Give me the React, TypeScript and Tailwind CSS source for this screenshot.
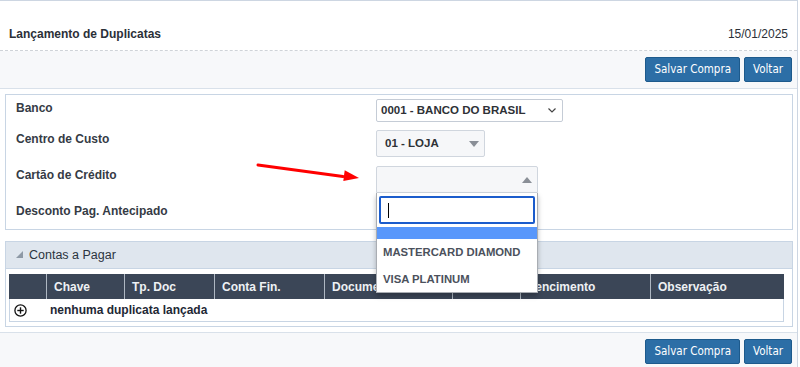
import React from "react";

function Btn({ children }: { children: React.ReactNode }) {
  return (
    <button className="h-[25px] px-[8px] rounded-[2px] border border-[#1d5a8c] bg-[#2c6ea6] text-white text-[11.5px] leading-none font-['DejaVu_Sans_Condensed','DejaVu_Sans',Tahoma,sans-serif]">
      {children}
    </button>
  );
}

function Toolbar({ className = "" }: { className?: string }) {
  return (
    <div className={`flex justify-end gap-[4px] bg-[#f7f8fa] pr-[5px] ${className}`}>
      <Btn>Salvar Compra</Btn>
      <Btn>Voltar</Btn>
    </div>
  );
}

function TriDown() {
  return (
    <svg width="10" height="6" viewBox="0 0 10 6">
      <polygon points="0,0 10,0 5,6" fill="#8a8f97" />
    </svg>
  );
}

function TriUp() {
  return (
    <svg width="10" height="6" viewBox="0 0 10 6">
      <polygon points="0,6 10,6 5,0" fill="#8a8f97" />
    </svg>
  );
}

function FormRow({ label, h, children }: { label: string; h: string; children?: React.ReactNode }) {
  return (
    <div className={`flex ${h}`}>
      <div className="w-[370px] pl-[10px] pt-[1px] leading-[16px] text-[12px] font-bold text-[#353b45]">{label}</div>
      <div className="relative">{children}</div>
    </div>
  );
}

// a coluna de valor fica escondida atrás da lista aberta
const headers = ["", "Chave", "Tp. Doc", "Conta Fin.", "Documento", "", "Vencimento", "Observação"];

export default function App() {
  return (
    <div className="w-[800px] h-[367px] overflow-hidden bg-white font-['Liberation_Sans',Arial,sans-serif]">
      <div className="w-[798px] h-[367px] border-t border-r border-[#cdd6e2] flex flex-col">
        {/* cabeçalho */}
        <div className="h-[50px] shrink-0 flex justify-between px-[9px] pt-[24px] border-b border-dashed border-[#cfd3d8]">
          <span className="text-[12px] leading-[18px] font-bold text-[#2b3038]">Lançamento de Duplicatas</span>
          <span className="text-[12px] leading-[18px] text-[#2b3038]">15/01/2025</span>
        </div>
        <Toolbar className="h-[38px] shrink-0 pt-[6px] border-b border-[#d9e1ea]" />

        <div className="pl-[5px] pr-[4px] pt-[5px]">
          {/* formulário */}
          <div className="relative z-10 border border-[#c8d5e4] pt-[4px] h-[136px]">
            <FormRow label="Banco" h="h-[31px]">
              <div className="w-[187px] h-[23px] flex items-center justify-between pl-[4px] pr-[6px] bg-white border border-[#c5ccd6] rounded-[2px] text-[11.5px] font-bold text-[#2e3136]">
                <span>0001 - BANCO DO BRASIL</span>
                <svg width="8" height="5" viewBox="0 0 8 5">
                  <polyline points="0.5,0.5 4,4 7.5,0.5" fill="none" stroke="#444" strokeWidth="1.2" />
                </svg>
              </div>
            </FormRow>
            <FormRow label="Centro de Custo" h="h-[36px]">
              <div className="w-[109px] h-[27px] flex items-center justify-between pl-[8px] pr-[5px] bg-[#f6f7f9] border border-[#d0d6de] rounded-[2px] text-[11.5px] font-bold text-[#2e3136]">
                <span>01 - LOJA</span>
                <TriDown />
              </div>
            </FormRow>
            <FormRow label="Cartão de Crédito" h="h-[36px]">
              <div className="w-[162px] h-[27px] flex items-center justify-end pr-[5px] bg-[#f6f7f9] border border-[#d0d6de] rounded-t-[2px]">
                <TriUp />
              </div>
              {/* lista aberta */}
              <div className="absolute left-0 top-[27px] w-[162px] h-[100px] bg-white border border-t-0 border-[#a9adb3] shadow-[0_3px_5px_rgba(0,0,0,0.25)]">
                <div className="px-[2px] pt-[3px]">
                  <div className="h-[28px] border-2 border-[#1b5ccc] rounded-[2px] flex items-center pl-[7px]">
                    <div className="w-[1px] h-[15px] bg-black" />
                  </div>
                </div>
                <div className="mt-[3px] h-[12px] bg-[#5897fb]" />
                <div className="h-[26px] flex items-center pl-[6px] text-[11.3px] font-bold text-[#4b515c]">MASTERCARD DIAMOND</div>
                <div className="h-[27px] flex items-center pl-[6px] pt-[1px] text-[11.3px] font-bold text-[#4b515c]">VISA PLATINUM</div>
              </div>
            </FormRow>
            <FormRow label="Desconto Pag. Antecipado" h="h-[26px]" />

            <svg className="absolute left-[245px] top-[66px]" width="110" height="26" viewBox="0 0 110 26">
              <line x1="7" y1="4" x2="92" y2="15.5" stroke="#ff0000" strokeWidth="3" strokeLinecap="round" />
              <polygon points="108,17 93.7,9.2 92.3,20" fill="#ff0000" />
            </svg>
          </div>

          {/* contas a pagar */}
          <div className="mt-[11px] border border-[#c8d5e4] h-[86px]">
            <div className="h-[27px] flex items-center gap-[6px] pl-[9px] bg-[#dfe6ee] border-b border-[#c8d5e4]">
              <svg width="8" height="8" viewBox="0 0 8 8">
                <polygon points="8,0 8,7 1,7" fill="#8e99a6" />
              </svg>
              <span className="text-[12.5px] text-[#2b3440]">Contas a Pagar</span>
            </div>
            <div className="pl-[3px] pt-[5px]">
              <div className="w-[775px]">
                <div className="grid grid-cols-[37px_78px_90px_110px_128px_68px_130px_134px] h-[25px] bg-[#3b4657]">
                  {headers.map((h, i) => (
                    <div
                      key={i}
                      className={`flex items-center pl-[7px] text-[12px] font-bold text-[#eef1f4] ${i > 0 ? "border-l border-[#aeb7c2]" : ""}`}
                    >
                      {h}
                    </div>
                  ))}
                </div>
                <div className="h-[23px] flex items-center border-x border-b border-[#c8d5e4]">
                  <div className="w-[36px] flex pl-[4px]">
                    <svg width="13" height="13" viewBox="0 0 13 13">
                      <circle cx="6.5" cy="6.5" r="5.6" fill="none" stroke="#111" strokeWidth="1.3" />
                      <line x1="6.5" y1="3.3" x2="6.5" y2="9.7" stroke="#111" strokeWidth="1.4" />
                      <line x1="3.3" y1="6.5" x2="9.7" y2="6.5" stroke="#111" strokeWidth="1.4" />
                    </svg>
                  </div>
                  <span className="pl-[4px] text-[12px] font-bold text-[#1e2835]">nenhuma duplicata lançada</span>
                </div>
              </div>
            </div>
          </div>
        </div>

        <Toolbar className="mt-[5px] flex-1 pt-[6px] border-t border-[#d9e1ea]" />
      </div>
    </div>
  );
}
